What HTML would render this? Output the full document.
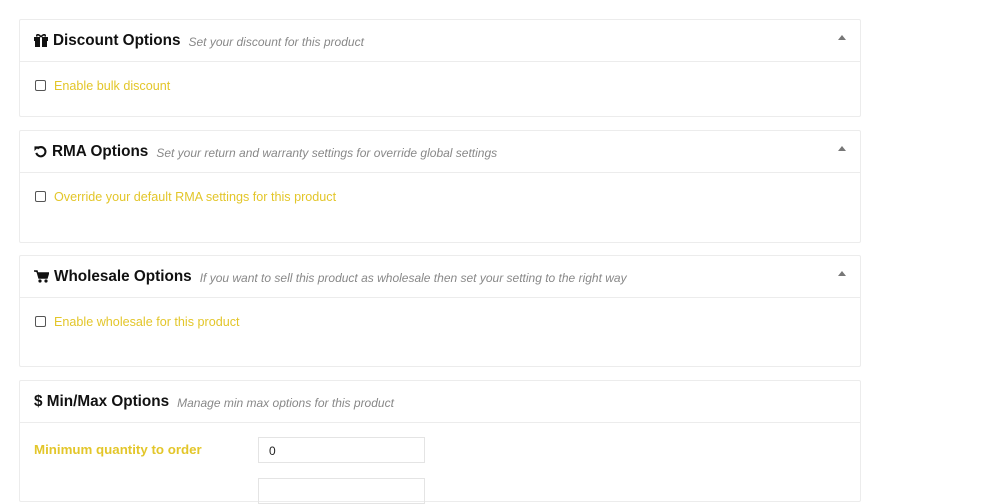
<!DOCTYPE html><html><head><style>
body{margin:0;background:#fff;font-family:"Liberation Sans",sans-serif;width:1000px;height:484px;overflow:hidden;position:relative}
.p{position:absolute;left:19px;width:840px;border:1px solid #ececec;border-radius:2px;background:#fff}
.h{height:42px;border-bottom:1px solid #ececec;display:flex;align-items:center;padding-left:14px;box-sizing:border-box}
.t{font-weight:bold;font-size:15.3px;color:#111;display:flex;align-items:center}
.s{font-style:italic;font-size:12px;color:#888;margin-left:8px;margin-top:2px}
.car{position:absolute;right:14px;top:15px;width:0;height:0;border-left:4px solid transparent;border-right:4px solid transparent;border-bottom:5px solid #777}
.cb{position:absolute;left:15px;width:9px;height:9px;border:1px solid #555;border-radius:2px}
.l{position:absolute;left:34px;font-size:12.6px;color:#e3c62a}
.in{position:absolute;left:238px;width:167px;height:26px;border:1px solid #e4e4e4;font-size:12px;padding-left:10px;box-sizing:border-box;line-height:26px;color:#222}
svg{margin-right:5px}
</style></head><body>
<div class="p" style="top:19px;height:96px"><div class="h"><span class="t"><svg width="14" height="13" viewBox="0 0 14 13"><rect x="0" y="3" width="14" height="4" fill="#111"/><rect x="1" y="7" width="12" height="6" fill="#111"/><rect x="6" y="3" width="2" height="10" fill="#fff"/><path d="M7 3C5 0 2 0 3 2.5 M7 3C9 0 12 0 11 2.5" stroke="#111" stroke-width="1.6" fill="none"/></svg>Discount Options</span><span class="s">Set your discount for this product</span><div class="car"></div></div>
<div class="cb" style="top:60px"></div><div class="l" style="top:59px">Enable bulk discount</div></div>
<div class="p" style="top:130px;height:111px"><div class="h"><span class="t"><svg width="13" height="13" viewBox="0 0 14 14"><path d="M3.5 4A5 5 0 1 1 2.5 8.5" stroke="#111" stroke-width="2.2" fill="none"/><path d="M0.5 1.5L5.5 1.5L0.5 6.5Z" fill="#111"/></svg>RMA Options</span><span class="s">Set your return and warranty settings for override global settings</span><div class="car"></div></div>
<div class="cb" style="top:60px"></div><div class="l" style="top:59px">Override your default RMA settings for this product</div></div>
<div class="p" style="top:255px;height:110px"><div class="h"><span class="t"><svg width="15" height="13" viewBox="0 0 15 13"><path d="M0 1H3L5 8H13L14.5 3H4" fill="#111" stroke="#111" stroke-width="1.5"/><circle cx="6" cy="11" r="1.6" fill="#111"/><circle cx="12" cy="11" r="1.6" fill="#111"/></svg>Wholesale Options</span><span class="s">If you want to sell this product as wholesale then set your setting to the right way</span><div class="car"></div></div>
<div class="cb" style="top:60px"></div><div class="l" style="top:59px">Enable wholesale for this product</div></div>
<div class="p" style="top:380px;height:120px"><div class="h"><span class="t">$&nbsp;Min/Max Options</span><span class="s">Manage min max options for this product</span></div>
<div class="l" style="left:14px;top:61px;font-weight:bold;font-size:13.3px">Minimum quantity to order</div>
<div class="in" style="top:56px">0</div><div class="in" style="top:97px"></div></div>
</body></html>
